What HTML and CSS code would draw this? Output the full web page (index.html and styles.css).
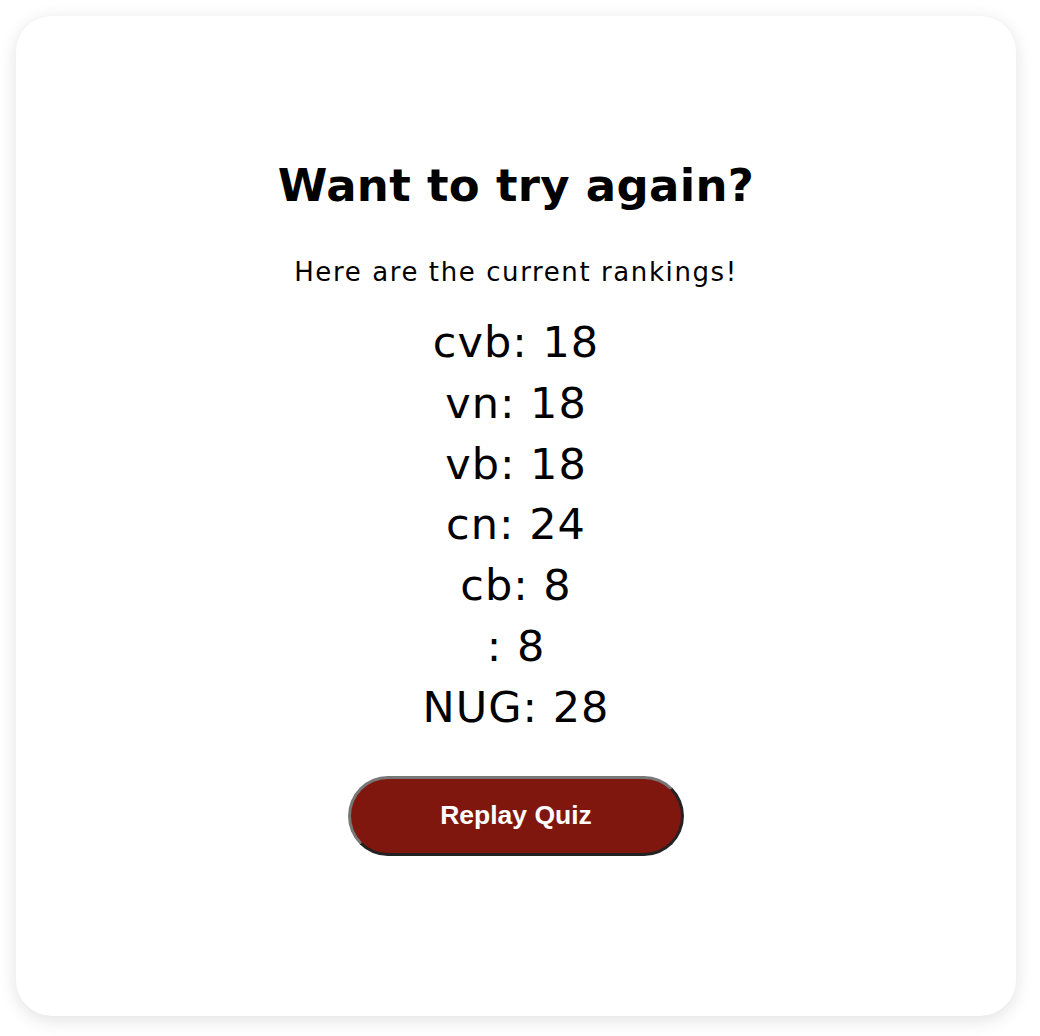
FILE: index.html
```html
<!DOCTYPE html>
<html lang="en">
<head>
<meta charset="utf-8">
<title>Quiz results</title>
<link rel="stylesheet" href="styles.css">
</head>
<body>
<main class="card">
  <h1 class="title">Want to try again?</h1>
  <p class="subtitle">Here are the current rankings!</p>
  <ul class="rankings">
    <li>cvb: 18</li>
    <li>vn: 18</li>
    <li>vb: 18</li>
    <li>cn: 24</li>
    <li>cb: 8</li>
    <li>: 8</li>
    <li>NUG: 28</li>
  </ul>
  <button class="replay" type="button">Replay Quiz</button>
</main>
</body>
</html>
```
FILE: styles.css
```css
html, body {
  margin: 0;
  padding: 0;
  background: #ffffff;
}
body {
  padding: 16px 24px 20px 16px;
  font-family: "DejaVu Sans", "Noto Sans", sans-serif;
  color: #000;
}
.card {
  box-sizing: border-box;
  width: 1000px;
  height: 1000px;
  background: #fff;
  border-radius: 36px;
  box-shadow: 0 4px 18px rgba(0, 0, 0, 0.12);
  display: flex;
  flex-direction: column;
  align-items: center;
  padding-top: 140px;
}
.title {
  margin: 0;
  font-size: 45px;
  font-weight: 900;
  line-height: 60px;
  letter-spacing: 0.3px;
}
.subtitle {
  margin: 40px 0 0;
  font-size: 26px;
  line-height: 32px;
  letter-spacing: 1.6px;
}
.rankings {
  list-style: none;
  margin: 24px 0 0;
  padding: 0;
  text-align: center;
  font-size: 43px;
  line-height: 60.8px;
  letter-spacing: 1px;
}
.replay {
  margin-top: 38px;
  width: 336px;
  height: 80px;
  border-radius: 40px;
  border: 3px solid;
  border-color: #777 #222 #222 #777;
  background: #80170f;
  color: #fff;
  font-family: "Liberation Sans", Arial, sans-serif;
  font-weight: 700;
  font-size: 26.5px;
}
```
